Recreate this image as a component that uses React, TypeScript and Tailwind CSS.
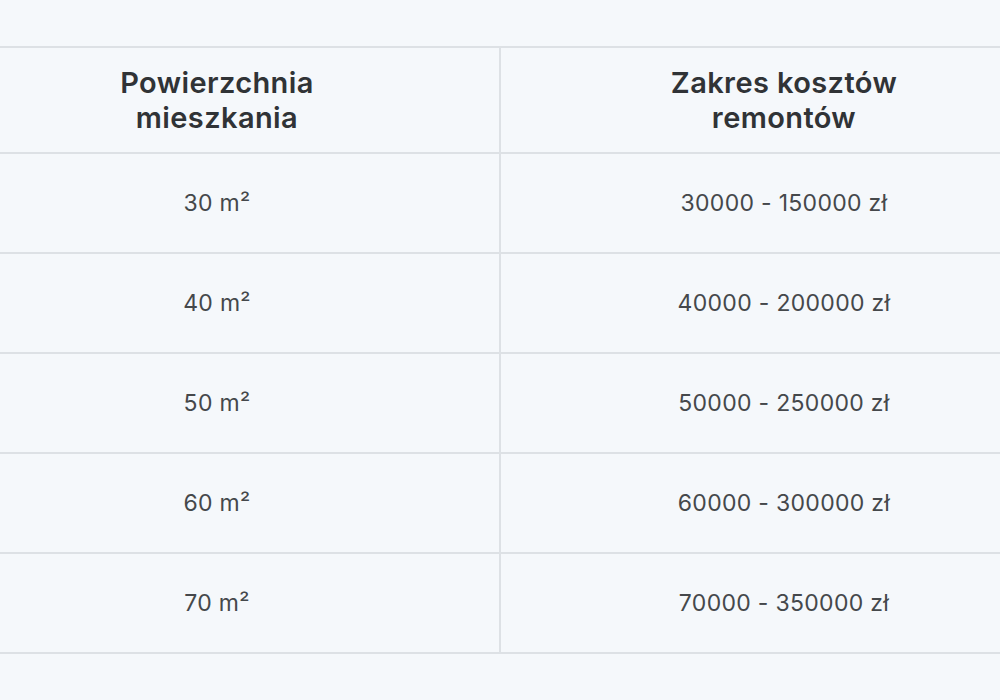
import React from "react";

const rows = [
  ["30 m²", "30000 - 150000 zł"],
  ["40 m²", "40000 - 200000 zł"],
  ["50 m²", "50000 - 250000 zł"],
  ["60 m²", "60000 - 300000 zł"],
  ["70 m²", "70000 - 350000 zł"],
];

export default function App() {
  return (
    <div
      className="w-[1000px] h-[700px] overflow-hidden bg-[#f5f8fb] pt-[46px]"
      style={{ fontFamily: "Inter, 'Noto Sans', sans-serif" }}
    >
      <div className="ml-[-65px] w-[1132px] border-t-2 border-[#dde1e5]">
        <div className="grid grid-cols-2 h-[106px] border-b-2 border-[#dde1e5]">
          <div className="flex items-center justify-center border-r-2 border-[#dde1e5] text-center text-[29px] tracking-[0.4px] leading-[35px] font-semibold text-[#303336]">
            Powierzchnia
            <br />
            mieszkania
          </div>
          <div className="flex items-center justify-center text-center text-[29px] tracking-[0.4px] leading-[35px] font-semibold text-[#303336]">
            Zakres kosztów
            <br />
            remontów
          </div>
        </div>
        {rows.map(([a, b]) => (
          <div key={a} className="grid grid-cols-2 h-[100px] border-b-2 border-[#dde1e5]">
            <div className="flex items-center justify-center border-r-2 border-[#dde1e5] text-[23px] tracking-[0.3px] text-[#45484b]">
              {a}
            </div>
            <div className="flex items-center justify-center text-[23px] tracking-[0.3px] text-[#45484b]">
              {b}
            </div>
          </div>
        ))}
      </div>
    </div>
  );
}
